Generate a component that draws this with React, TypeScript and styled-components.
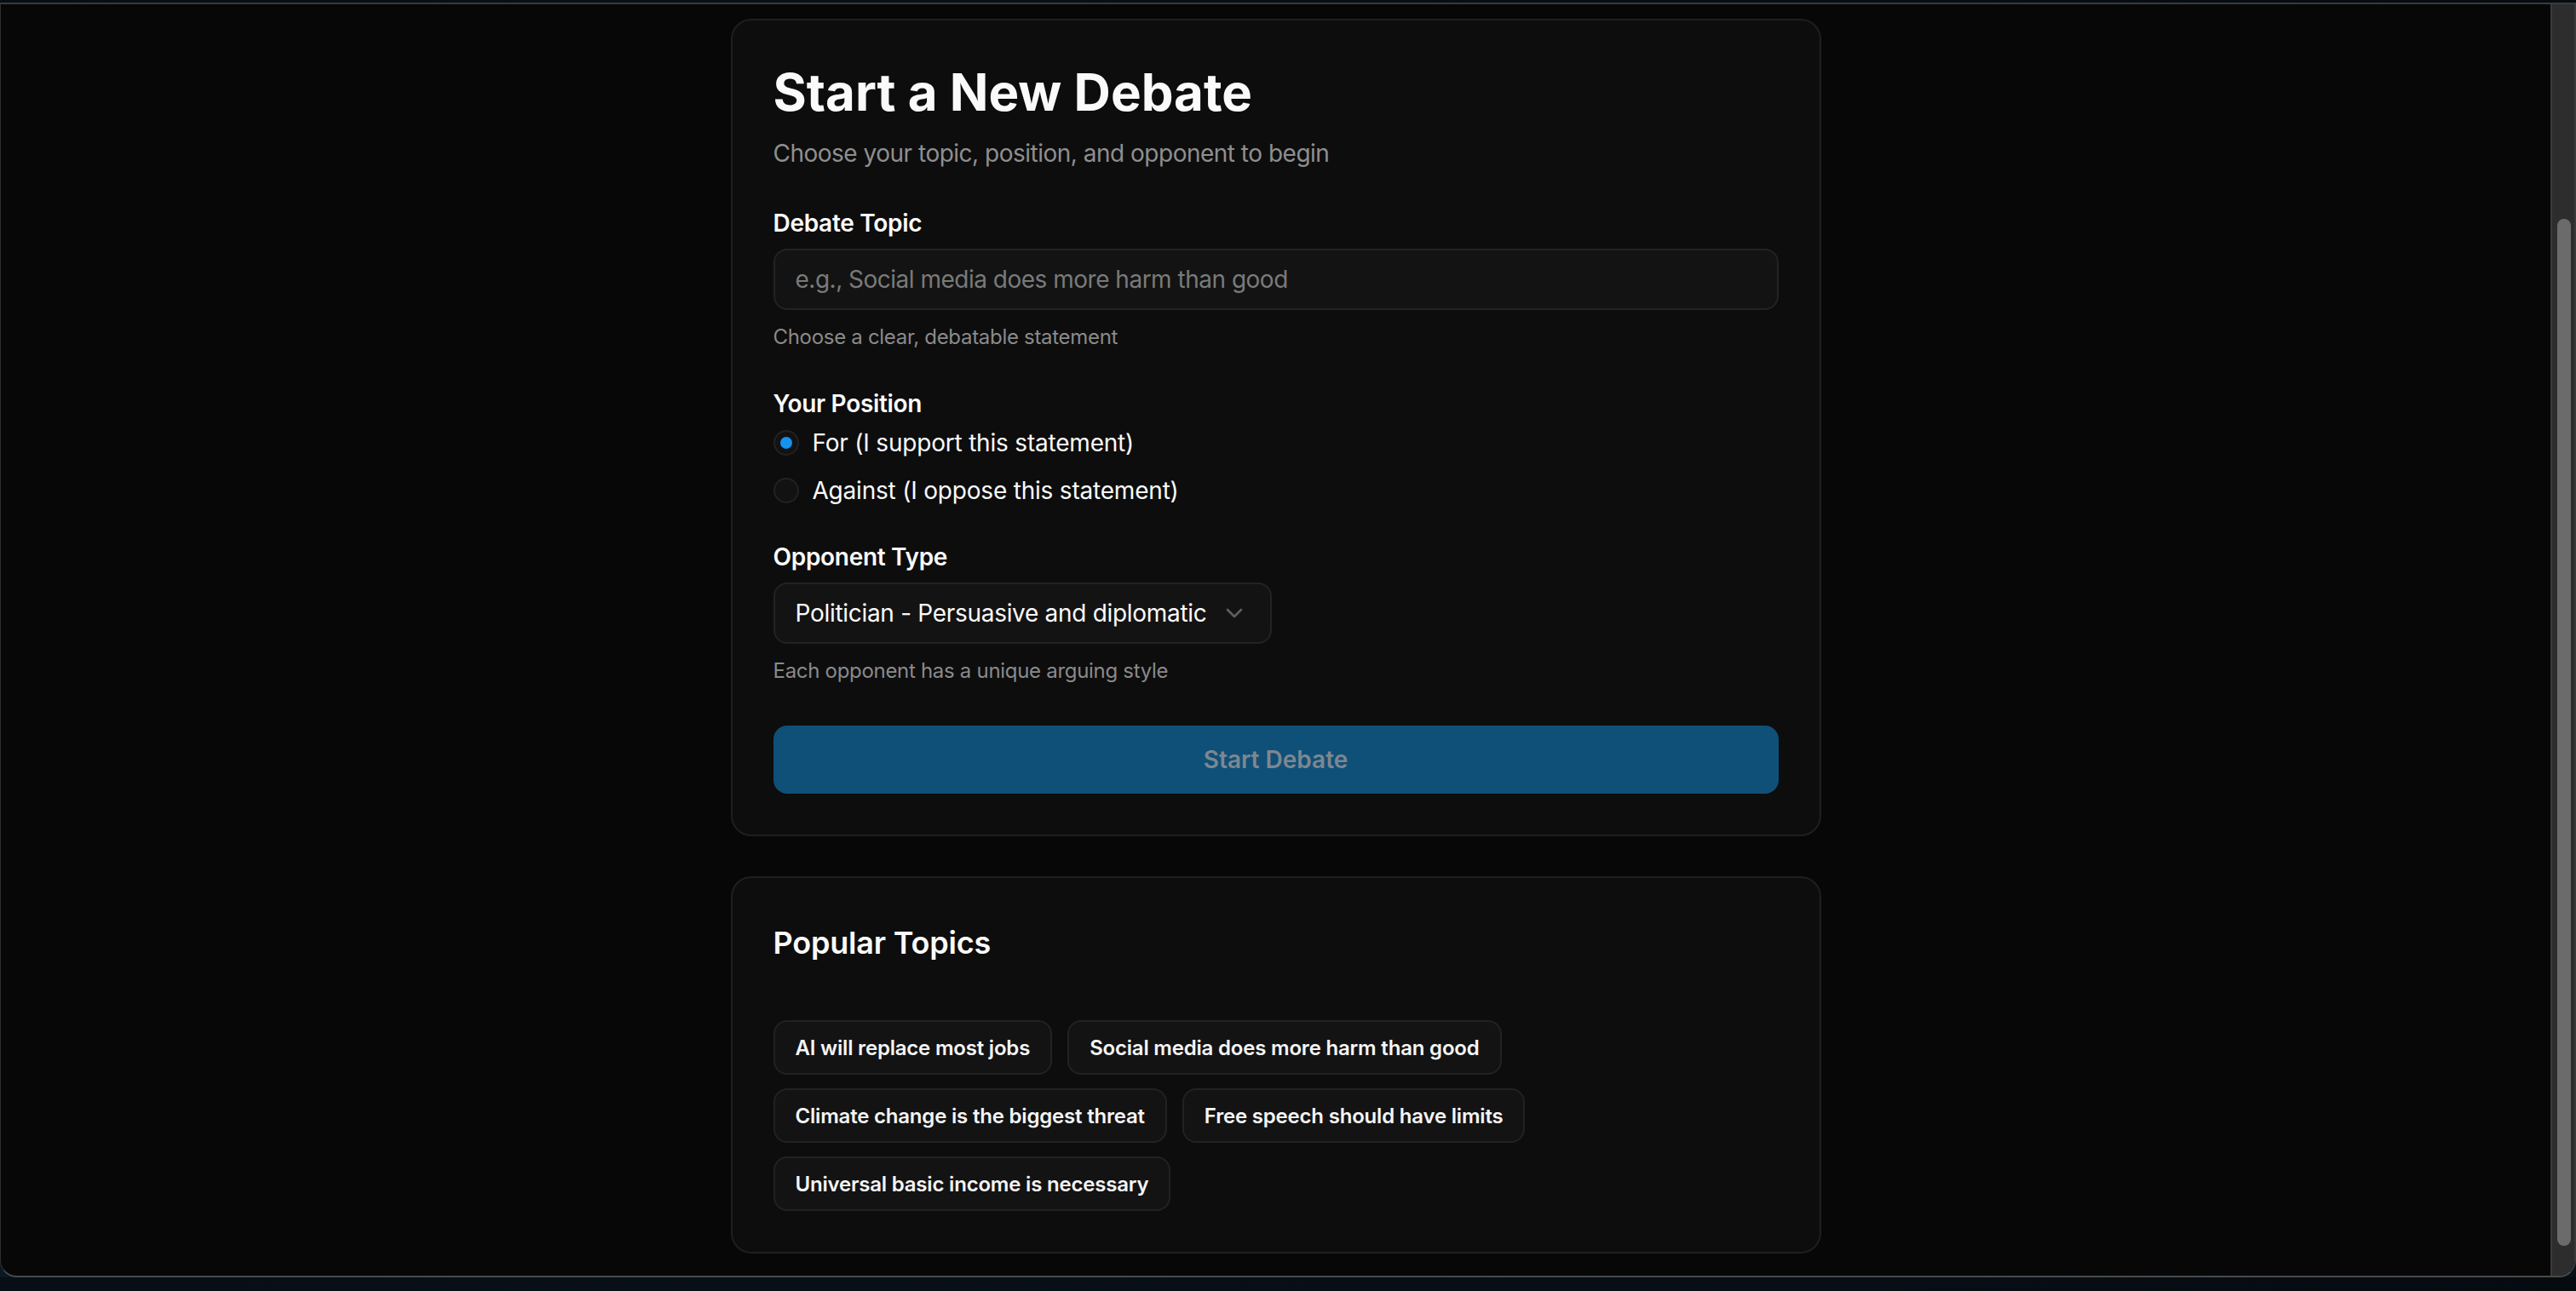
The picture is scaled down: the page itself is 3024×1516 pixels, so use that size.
import React, { useState } from "react";
import styled, { createGlobalStyle } from "styled-components";
import { ChevronDown } from "lucide-react";

const GlobalStyle = createGlobalStyle`
  html, body {
    margin: 0;
    padding: 0;
  }
  body {
    background: radial-gradient(ellipse at 30% 100%, #10202e 0%, #08111a 60%, #060b10 100%);
    font-family: Inter, "Noto Sans", sans-serif;
    overflow: hidden;
  }
  * {
    box-sizing: border-box;
  }
`;

const Window = styled.div`
  margin-top: 3px;
  height: 1497px;
  display: flex;
  border-top: 2px solid #3a3a3a;
  border-left: 1px solid #2f2f2f;
  border-right: 2px solid #3a3a3a;
  border-bottom: 2px solid #4a4a4a;
  border-radius: 0 0 20px 20px;
  overflow: hidden;
  background: #070707;
`;

const Viewport = styled.main`
  flex: 1;
  padding-top: 17px;
  display: flex;
  flex-direction: column;
  align-items: center;
  gap: 47px;
  overflow: hidden;
`;

const ScrollTrack = styled.div`
  width: 28px;
  background: #2d2d2d;
  border-left: 2px solid #3b3b3b;
  padding: 252px 0 0 6px;
`;

const ScrollThumb = styled.div`
  width: 16px;
  height: 1206px;
  border-radius: 8px;
  background: #6b6b6b;
`;

const Card = styled.section`
  width: 1280px;
  flex-shrink: 0;
  background: #0d0d0d;
  border: 2px solid #1f1f1f;
  border-radius: 24px;
  padding: 48px;
  color: #fafafa;
`;

const Title = styled.h1`
  margin: 0;
  font-size: 60px;
  line-height: 72px;
  font-weight: 700;
  letter-spacing: 0;
`;

const Subtitle = styled.p`
  margin: 16px 0 0;
  font-size: 28px;
  line-height: 40px;
  color: #8f8f8f;
  letter-spacing: -0.5px;
`;

const Form = styled.div`
  margin-top: 48px;
  display: flex;
  flex-direction: column;
  gap: 48px;
`;

const Field = styled.div`
  display: flex;
  flex-direction: column;
  align-items: flex-start;
  gap: 16px;
`;

const Label = styled.label`
  font-size: 28px;
  line-height: 28px;
  font-weight: 600;
  color: #fafafa;
  letter-spacing: -0.3px;
`;

const TextInput = styled.input`
  width: 100%;
  height: 72px;
  padding: 0 24px;
  background: #131313;
  border: 2px solid #232323;
  border-radius: 16px;
  color: #fafafa;
  font-family: inherit;
  font-size: 28px;
  letter-spacing: -0.5px;
  outline: none;

  &::placeholder {
    color: #7a7a7a;
  }
`;

const Hint = styled.p`
  margin: 0;
  font-size: 24px;
  line-height: 32px;
  color: #8a8a8a;
  letter-spacing: -0.3px;
`;

const RadioGroup = styled.div`
  display: flex;
  flex-direction: column;
  gap: 24px;
`;

const RadioRow = styled.label`
  display: flex;
  align-items: center;
  gap: 16px;
  height: 32px;
  font-size: 28px;
  line-height: 32px;
  color: #fafafa;
  letter-spacing: -0.2px;
  cursor: pointer;
`;

const RadioCircle = styled.span<{ $checked: boolean }>`
  width: 30px;
  height: 30px;
  border-radius: 50%;
  border: 2px solid #222;
  background: #121212;
  display: flex;
  align-items: center;
  justify-content: center;

  &::after {
    content: "";
    width: 14px;
    height: 14px;
    border-radius: 50%;
    background: #1592f0;
    display: ${(p) => (p.$checked ? "block" : "none")};
  }
`;

const SelectButton = styled.button`
  height: 72px;
  padding: 0 26px 0 24px;
  display: inline-flex;
  align-items: center;
  gap: 16px;
  background: #131313;
  border: 2px solid #232323;
  border-radius: 16px;
  color: #fafafa;
  font-family: inherit;
  font-size: 28px;
  letter-spacing: -0.3px;
  cursor: pointer;

  svg {
    color: #5e5e5e;
  }
`;

const SubmitButton = styled.button`
  width: 100%;
  height: 80px;
  border: none;
  border-radius: 16px;
  background: #0f5079;
  color: #7e8790;
  font-family: inherit;
  font-size: 28px;
  font-weight: 600;
  cursor: not-allowed;
`;

const SectionTitle = styled.h2`
  margin: 0 0 63px;
  font-size: 36px;
  line-height: 56px;
  font-weight: 600;
  letter-spacing: -0.2px;
`;

const ChipList = styled.div`
  display: flex;
  flex-wrap: wrap;
  gap: 16px 18px;
  max-width: 900px;
`;

const Chip = styled.button`
  height: 64px;
  padding: 0 24px;
  background: #131313;
  border: 2px solid #222;
  border-radius: 16px;
  color: #f5f5f5;
  font-family: inherit;
  font-size: 24px;
  font-weight: 600;
  letter-spacing: -0.2px;
  cursor: pointer;
`;

const topics = [
  "AI will replace most jobs",
  "Social media does more harm than good",
  "Climate change is the biggest threat",
  "Free speech should have limits",
  "Universal basic income is necessary",
];

const positions = [
  { id: "for", text: "For (I support this statement)" },
  { id: "against", text: "Against (I oppose this statement)" },
];

export default function App() {
  const [position, setPosition] = useState("for");
  const [topic, setTopic] = useState("");

  return (
    <>
      <GlobalStyle />
      <Window>
        <Viewport>
          <Card>
            <Title>Start a New Debate</Title>
            <Subtitle>Choose your topic, position, and opponent to begin</Subtitle>

            <Form>
              <Field>
                <Label htmlFor="topic">Debate Topic</Label>
                <TextInput
                  id="topic"
                  value={topic}
                  onChange={(e) => setTopic(e.target.value)}
                  placeholder="e.g., Social media does more harm than good"
                />
                <Hint>Choose a clear, debatable statement</Hint>
              </Field>

              <Field>
                <Label>Your Position</Label>
                <RadioGroup>
                  {positions.map((p) => (
                    <RadioRow key={p.id} onClick={() => setPosition(p.id)}>
                      <RadioCircle $checked={position === p.id} />
                      {p.text}
                    </RadioRow>
                  ))}
                </RadioGroup>
              </Field>

              <Field>
                <Label>Opponent Type</Label>
                <SelectButton>
                  Politician - Persuasive and diplomatic
                  <ChevronDown size={32} strokeWidth={2} />
                </SelectButton>
                <Hint>Each opponent has a unique arguing style</Hint>
              </Field>

              <SubmitButton disabled>Start Debate</SubmitButton>
            </Form>
          </Card>

          <Card>
            <SectionTitle>Popular Topics</SectionTitle>
            <ChipList>
              {topics.map((t) => (
                <Chip key={t} onClick={() => setTopic(t)}>
                  {t}
                </Chip>
              ))}
            </ChipList>
          </Card>
        </Viewport>
        <ScrollTrack>
          <ScrollThumb />
        </ScrollTrack>
      </Window>
    </>
  );
}
